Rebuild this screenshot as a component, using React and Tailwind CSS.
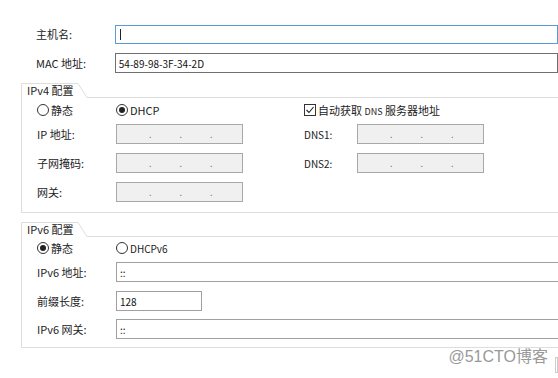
import React from 'react';

const FONT = { fontFamily: '"Noto Sans CJK SC", "Microsoft YaHei", sans-serif' };

function Radio({ checked, label }) {
  return (
    <div className="flex items-center gap-[2px]">
      <span className="flex h-[12px] w-[12px] items-center justify-center rounded-full border border-[#333] bg-white">
        {checked && <span className="h-[6px] w-[6px] rounded-full bg-[#222]" />}
      </span>
      <span>{label}</span>
    </div>
  );
}

function Tab({ label }) {
  return (
    <div className="relative z-10 -mb-px h-[15px] w-[70px]">
      <svg className="absolute left-0 top-0" width="70" height="15" viewBox="0 0 70 15">
        <path d="M0.5 15 V0.5 H57 L66 14.5 H70 V15 Z" fill="#fff" />
        <path d="M0.5 15 V0.5 H57 L66 14.5 H70" fill="none" stroke="#dedede" />
      </svg>
      <span className="relative ml-[6px] block text-[11px] leading-[14px] text-[#222]">{label}</span>
    </div>
  );
}

function IpBox() {
  return (
    <div className="flex h-[20px] w-[127px] items-center border border-[#a8a8a8] bg-[#f0f0f0]">
      <span className="ml-[32px] text-[9px] leading-none text-[#777]">.</span>
      <span className="ml-[28px] text-[9px] leading-none text-[#777]">.</span>
      <span className="ml-[28px] text-[9px] leading-none text-[#777]">.</span>
    </div>
  );
}

function TextBox({ value, className = '' }) {
  return (
    <div className={`flex h-[20px] items-center border border-[#a0a0a0] bg-white pl-[3px] text-[10px] text-[#111] ${className}`}>
      {value}
    </div>
  );
}

export default function App() {
  return (
    <div className="relative h-[378px] w-[558px] overflow-hidden bg-white text-[11px] text-[#222]" style={FONT}>
      {/* host + mac */}
      <div className="mt-[25px] flex items-center">
        <span className="w-[116px] pl-[36px]">主机名:</span>
        <div className="flex h-[19px] w-[450px] items-center border border-[#5b9bd5] pl-[4px]">
          <span className="h-[11px] w-px bg-[#222]" />
        </div>
      </div>
      <div className="mt-[9px] flex items-center">
        <span className="w-[116px] pl-[36px]">MAC 地址:</span>
        <div className="flex h-[20px] w-[450px] items-center border border-[#707070] pl-[3px] text-[10px] text-[#111]">
          54-89-98-3F-34-2D
        </div>
      </div>

      {/* IPv4 */}
      <div className="ml-[21px] mt-[10px]">
        <Tab label="IPv4 配置" />
        <div className="h-[116px] w-[560px] border border-[#dedede]">
          <div className="flex">
            <div className="w-[282px]">
              <div className="mt-[5px] flex h-[14px] items-center">
                <div className="w-[94px] pl-[15px]"><Radio label="静态" /></div>
                <Radio checked label="DHCP" />
              </div>
              <div className="mt-[7px] flex items-center">
                <span className="w-[94px] pl-[15px]">IP 地址:</span>
                <IpBox />
              </div>
              <div className="mt-[9px] flex items-center">
                <span className="w-[94px] pl-[15px]">子网掩码:</span>
                <IpBox />
              </div>
              <div className="mt-[9px] flex items-center">
                <span className="w-[94px] pl-[15px]">网关:</span>
                <IpBox />
              </div>
            </div>
            <div>
              <div className="mt-[5px] flex h-[14px] items-center gap-[2px] text-[11px]">
                <span className="flex h-[12px] w-[12px] items-center justify-center border border-[#333]">
                  <svg width="10" height="10" viewBox="0 0 10 10">
                    <path d="M1.5 5 L4 7.5 L8.5 2" fill="none" stroke="#222" strokeWidth="1.1" />
                  </svg>
                </span>
                <span>自动获取 <span className="text-[9px]">DNS</span> 服务器地址</span>
              </div>
              <div className="mt-[7px] flex items-center">
                <span className="w-[53px] text-[10px]">DNS1:</span>
                <IpBox />
              </div>
              <div className="mt-[9px] flex items-center">
                <span className="w-[53px] text-[10px]">DNS2:</span>
                <IpBox />
              </div>
            </div>
          </div>
        </div>
      </div>

      {/* IPv6 */}
      <div className="ml-[21px] mt-[9px]">
        <Tab label="IPv6 配置" />
        <div className="h-[112px] w-[560px] border border-[#dedede]">
          <div className="mt-[4px] flex h-[14px] items-center">
            <div className="w-[94px] pl-[15px]"><Radio checked label="静态" /></div>
            <Radio label={<span className="text-[10px]">DHCPv6</span>} />
          </div>
          <div className="mt-[7px] flex items-center">
            <span className="w-[94px] pl-[15px]">IPv6 地址:</span>
            <TextBox value="::" className="w-[450px]" />
          </div>
          <div className="mt-[9px] flex items-center">
            <span className="w-[94px] pl-[15px]">前缀长度:</span>
            <TextBox value="128" className="w-[86px]" />
          </div>
          <div className="mt-[8px] flex items-center">
            <span className="w-[94px] pl-[15px]">IPv6 网关:</span>
            <TextBox value="::" className="w-[450px]" />
          </div>
        </div>
      </div>

      {/* watermark */}
      <div className="absolute right-[10px] top-[347px] text-[16px] leading-[20px] text-[#999]" style={{ fontFamily: '"Liberation Sans", "Noto Sans CJK SC", sans-serif' }}>
        @51CTO博客
      </div>
      <div className="absolute right-0 top-[357px] h-[16px] w-[3px] border border-[#ccc]" />
    </div>
  );
}
